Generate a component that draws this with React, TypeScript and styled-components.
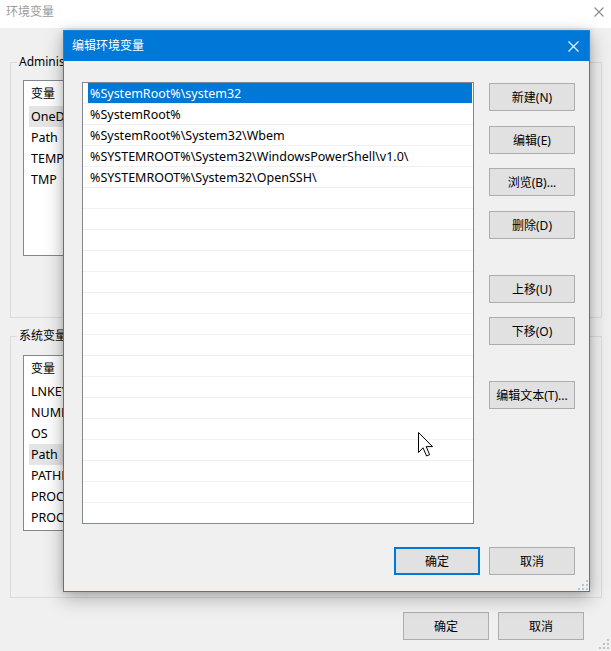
import React from 'react';
import styled, { createGlobalStyle, css } from 'styled-components';

const FONT = `"Noto Sans", "Noto Sans CJK SC", sans-serif`;

const GlobalStyle = createGlobalStyle`
  html, body { margin: 0; padding: 0; background: #f0f0f0; }
  body { font-family: ${FONT}; font-size: 12px; }
  * { box-sizing: border-box; }
`;

const Screen = styled.div`
  position: relative;
  width: 611px;
  height: 651px;
  overflow: hidden;
  background: #f0f0f0;
  font-family: ${FONT};
  font-size: 12px;
  color: #000;
`;

/* ---------- background window ---------- */
const BgWindow = styled.div`
  display: flex;
  flex-direction: column;
  height: 100%;
`;

const BgTitleBar = styled.div`
  height: 28px;
  background: #fff;
  display: flex;
  align-items: center;
  justify-content: space-between;
  padding: 0 7px 4px 6px;
  color: #9a9a9a;
  line-height: 16px;
`;

const BgBody = styled.div`
  display: flex;
  flex-direction: column;
  padding: 26px 9px 0 10px;
`;

const Group = styled.fieldset<{ $mt: number; $pt: number; $pb: number }>`
  margin: ${(p) => p.$mt}px 0 0 0;
  border: 1px solid #dcdcdc;
  padding: ${(p) => p.$pt}px 0 ${(p) => p.$pb}px 12px;
  min-width: 0;
`;

const Legend = styled.legend`
  padding: 0 2px;
  margin-left: -6px;
  line-height: 16px;
  font-size: 12px;
`;

const VarList = styled.div<{ $h: number }>`
  width: 460px;
  height: ${(p) => p.$h}px;
  background: #fff;
  border: 1px solid #828790;
  overflow: hidden;
`;

const VarHeader = styled.div`
  height: 25px;
  line-height: 25px;
  padding-left: 7px;
`;

const VarRow = styled.div<{ $hl?: boolean }>`
  height: 21px;
  line-height: 21px;
  margin-left: 5px;
  padding-left: 2px;
  font-size: 12.5px;
  ${(p) => p.$hl && css`background: #e5e5e5;`}
`;

const BgButtons = styled.div`
  display: flex;
  justify-content: flex-end;
  gap: 9px;
  margin-top: 14px;
  padding-right: 18px;
`;

/* ---------- dialog ---------- */
const Dialog = styled.div`
  position: absolute;
  left: 63px;
  top: 30px;
  width: 527px;
  height: 562px;
  border: 1px solid #1a84d8;
  background: #f0f0f0;
  display: flex;
  flex-direction: column;
  box-shadow: 0 6px 18px rgba(0, 0, 0, 0.3), 0 0 6px rgba(0, 0, 0, 0.12);
`;

const DialogTitle = styled.div`
  height: 30px;
  background: #0078d7;
  color: #fff;
  display: flex;
  align-items: center;
  justify-content: space-between;
  padding: 0 10px 0 8px;
  line-height: 16px;
`;

const DialogBody = styled.div`
  display: flex;
  flex-direction: column;
  padding: 21px 14px 16px 18px;
`;

const TopSection = styled.div`
  display: flex;
  gap: 15px;
`;

const PathList = styled.div`
  width: 392px;
  height: 442px;
  background: #fff;
  border: 1px solid #828790;
  overflow: hidden;
`;

const PathRow = styled.div`
  height: 21px;
  border-bottom: 1px solid #f0f0f0;
`;

const PathCell = styled.div<{ $sel?: boolean }>`
  height: 20px;
  padding-top: 2px;
  line-height: 18px;
  margin: 0 1px 0 5px;
  padding-left: 2px;
  font-size: 12.5px;
  white-space: nowrap;
  ${(p) =>
    p.$sel &&
    css`
      background: #0078d7;
      color: #fff;
    `}
`;

const SideButtons = styled.div`
  display: flex;
  flex-direction: column;
`;

const Button = styled.button<{ $mt?: number; $focus?: boolean }>`
  width: 86px;
  height: 28px;
  margin: ${(p) => p.$mt ?? 0}px 0 0 0;
  padding: 0;
  background: #e1e1e1;
  border: 1px solid #adadad;
  font-family: ${FONT};
  font-size: 12px;
  color: #000;
  white-space: nowrap;
  ${(p) =>
    p.$focus &&
    css`
      border: 2px solid #0078d7;
    `}
`;

const BottomButtons = styled.div`
  display: flex;
  justify-content: flex-end;
  gap: 9px;
  margin-top: 23px;
`;

const Grip = styled.svg<{ $r: number; $b: number }>`
  position: absolute;
  right: ${(p) => p.$r}px;
  bottom: ${(p) => p.$b}px;
`;

const Cursor = styled.svg`
  position: absolute;
  left: 418px;
  top: 432px;
`;

const CloseIcon = ({ color, size }: { color: string; size: number }) => (
  <svg width={size} height={size} viewBox={`0 0 ${size} ${size}`}>
    <path d={`M0.5 0.5 L${size - 0.5} ${size - 0.5} M${size - 0.5} 0.5 L0.5 ${size - 0.5}`} stroke={color} strokeWidth="1.1" />
  </svg>
);

const GripDots = ({ r, b }: { r: number; b: number }) => (
  <Grip $r={r} $b={b} width="10" height="10" viewBox="0 0 10 10">
    {[
      [8, 0],
      [8, 4],
      [4, 4],
      [8, 8],
      [4, 8],
      [0, 8],
    ].map(([x, y], i) => (
      <rect key={i} x={x} y={y} width="2" height="2" fill="#c2c2c2" />
    ))}
  </Grip>
);

const paths = [
  '%SystemRoot%\\system32',
  '%SystemRoot%',
  '%SystemRoot%\\System32\\Wbem',
  '%SYSTEMROOT%\\System32\\WindowsPowerShell\\v1.0\\',
  '%SYSTEMROOT%\\System32\\OpenSSH\\',
];
const rows = [...paths, ...Array(16).fill('')];

const userVars = ['OneDrive', 'Path', 'TEMP', 'TMP'];
const sysVars = ['LNKEY', 'NUMBER_OF_PROCESSORS', 'OS', 'Path', 'PATHEXT', 'PROCESSOR_ARCHITECTURE', 'PROCESSOR_IDENTIFIER'];

export default function App() {
  return (
    <>
      <GlobalStyle />
      <Screen>
        <BgWindow>
          <BgTitleBar>
            <span>环境变量</span>
            <CloseIcon color="#8a8a8a" size={10} />
          </BgTitleBar>
          <BgBody>
            <Group $mt={0} $pt={10} $pb={61}>
              <Legend>Administrator 的用户变量(U)</Legend>
              <VarList $h={176}>
                <VarHeader>变量</VarHeader>
                {userVars.map((v, i) => (
                  <VarRow key={v} $hl={i === 0}>
                    {v}
                  </VarRow>
                ))}
              </VarList>
            </Group>
            <Group $mt={10} $pt={11} $pb={66}>
              <Legend>系统变量(S)</Legend>
              <VarList $h={176}>
                <VarHeader>变量</VarHeader>
                {sysVars.map((v, i) => (
                  <VarRow key={v + i} $hl={i === 3}>
                    {v}
                  </VarRow>
                ))}
              </VarList>
            </Group>
            <BgButtons>
              <Button>确定</Button>
              <Button>取消</Button>
            </BgButtons>
          </BgBody>
        </BgWindow>
        <GripDots r={2} b={2} />

        <Dialog>
          <DialogTitle>
            <span>编辑环境变量</span>
            <CloseIcon color="#ffffff" size={11} />
          </DialogTitle>
          <DialogBody>
            <TopSection>
              <PathList>
                {rows.map((r, i) => (
                  <PathRow key={i}>
                    <PathCell $sel={i === 0}>{r}</PathCell>
                  </PathRow>
                ))}
              </PathList>
              <SideButtons>
                <Button $mt={1}>新建(N)</Button>
                <Button $mt={15}>编辑(E)</Button>
                <Button $mt={14}>浏览(B)...</Button>
                <Button $mt={15}>删除(D)</Button>
                <Button $mt={36}>上移(U)</Button>
                <Button $mt={14}>下移(O)</Button>
                <Button $mt={36}>编辑文本(T)...</Button>
              </SideButtons>
            </TopSection>
            <BottomButtons>
              <Button $focus>确定</Button>
              <Button>取消</Button>
            </BottomButtons>
          </DialogBody>
          <GripDots r={1} b={1} />
        </Dialog>

        <Cursor width="16" height="26" viewBox="0 0 16 26">
          <path
            d="M0.5 0.5 L0.5 20.5 L5 15.8 L8.6 24 L11.6 22.7 L8.2 14.6 L14.5 14.6 Z"
            fill="#fff"
            stroke="#000"
            strokeWidth="1"
            strokeLinejoin="miter"
          />
        </Cursor>
      </Screen>
    </>
  );
}
